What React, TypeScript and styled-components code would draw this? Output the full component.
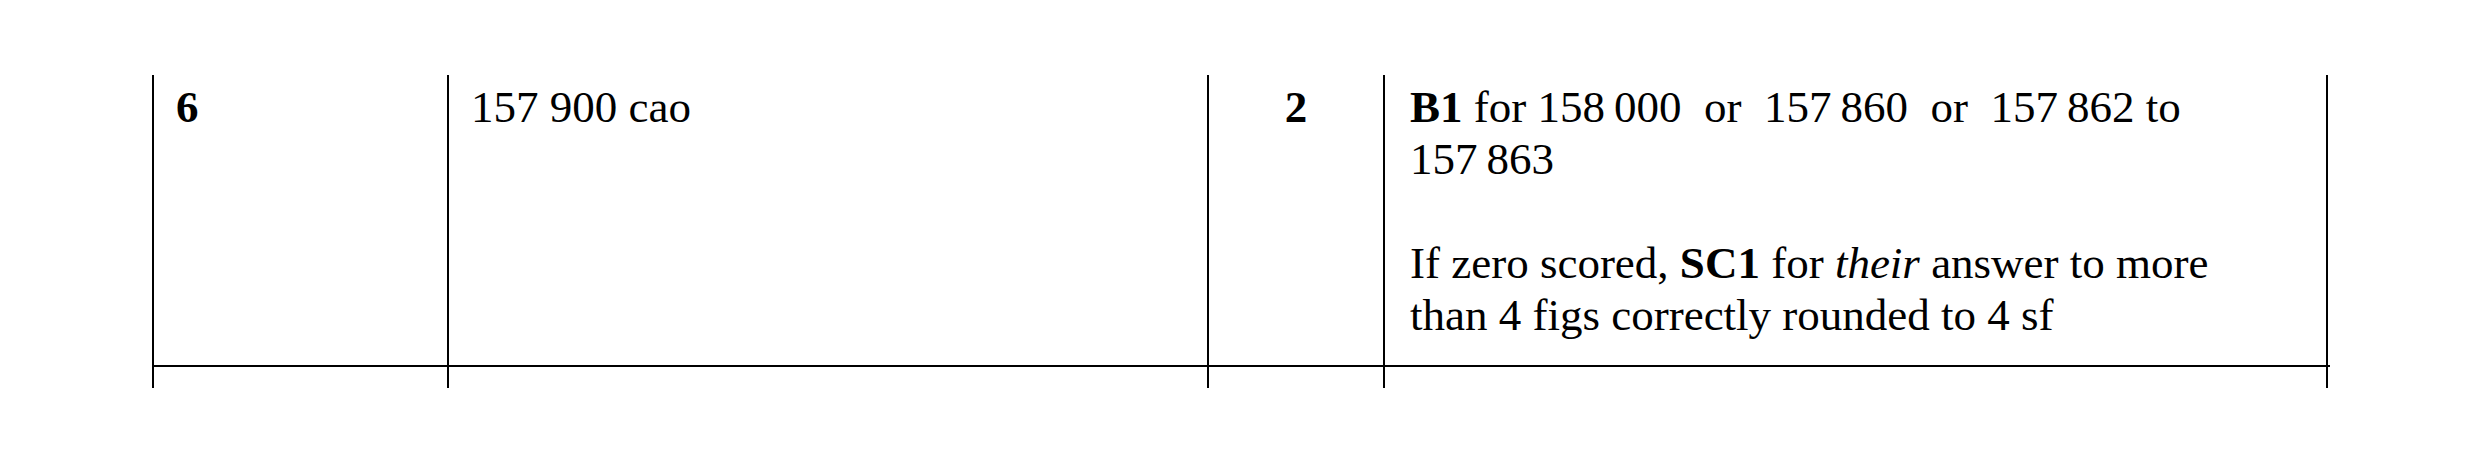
import React from "react";
import styled, { createGlobalStyle } from "styled-components";

const GlobalStyle = createGlobalStyle`
  html, body {
    margin: 0;
    padding: 0;
    background: #fff;
  }
  body {
    font-family: "Liberation Serif", "Times New Roman", serif;
    color: #000;
  }
`;

const columns = "295px 760px 176px 945px";

export default function App() {
  return (
    <>
      <GlobalStyle />
      <Page>
        <Table>
          <Row>
            <Cell>
              <Strong>6</Strong>
            </Cell>
            <Cell>157 900 cao</Cell>
            <Cell align="center">
              <Strong>2</Strong>
            </Cell>
            <Cell last pad={25}>
              <Para>
                <Strong>B1</Strong> for <Num>158{"\u2009"}000</Num>
                {"\u00a0 "}or{"\u00a0 "}
                <Num>157{"\u2009"}860</Num>
                {"\u00a0 "}or{"\u00a0 "}
                <Num>157{"\u2009"}862</Num> to <Num>157{"\u2009"}863</Num>
              </Para>
              <Para gap>
                If zero scored, <Strong>SC1</Strong> for <em>their</em> answer
                to more than 4 figs correctly rounded to 4 sf
              </Para>
            </Cell>
          </Row>
          <Row tail>
            <Cell />
            <Cell />
            <Cell />
            <Cell last />
          </Row>
        </Table>
      </Page>
    </>
  );
}

const Page = styled.div`
  padding: 75px 0 0 152px;
  height: 463px;
  box-sizing: border-box;
`;

const Table = styled.div`
  display: flex;
  flex-direction: column;
  width: 2178px;
`;

const Row = styled.div<{ tail?: boolean }>`
  display: grid;
  grid-template-columns: ${columns};
  height: ${({ tail }) => (tail ? "21px" : "292px")};
  border-bottom: ${({ tail }) => (tail ? "none" : "2px solid #000")};
  box-sizing: border-box;
`;

const Cell = styled.div<{ align?: string; last?: boolean; pad?: number }>`
  box-sizing: border-box;
  border-left: 2px solid #000;
  border-right: ${({ last }) => (last ? "2px solid #000" : "none")};
  padding: 6px ${({ last }) => (last ? 40 : 22)}px 0
    ${({ pad }) => pad ?? 22}px;
  text-align: ${({ align }) => align || "left"};
  font-size: 45px;
  line-height: 52px;
`;

const Para = styled.p<{ gap?: boolean }>`
  margin: ${({ gap }) => (gap ? "52px 0 0" : "0")};
`;

const Strong = styled.b`
  font-weight: 700;
`;

const Num = styled.span`
  white-space: nowrap;
`;
